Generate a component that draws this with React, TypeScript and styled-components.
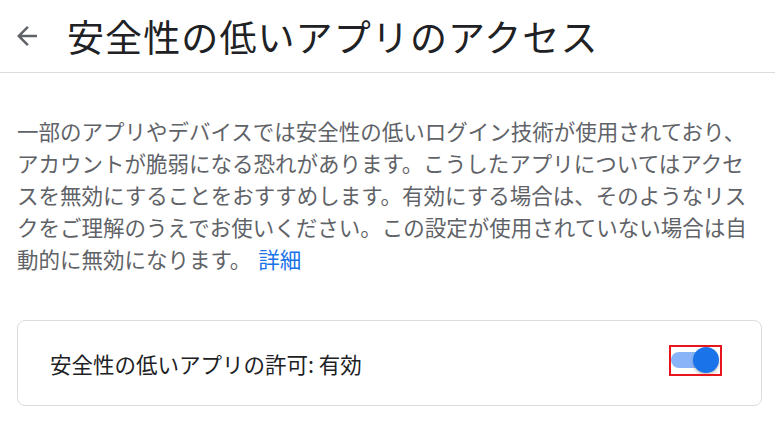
import styled, { createGlobalStyle } from "styled-components";

const GlobalStyle = createGlobalStyle`
  body {
    margin: 0;
    background: #ffffff;
    font-family: "Noto Sans CJK JP", "Noto Sans", sans-serif;
  }
`;

const Page = styled.div`
  width: 775px;
  height: 423px;
  overflow: hidden;
`;

const Header = styled.header`
  display: flex;
  align-items: center;
  gap: 25px;
  height: 72px;
  padding-left: 12px;
  border-bottom: 1px solid #dadce0;
  svg {
    flex: none;
    margin-top: -1px;
  }
  h1 {
    margin: 0;
    font-size: 37px;
    font-weight: 400;
    color: #202124;
    letter-spacing: 1.1px;
    line-height: 1;
  }
`;

const Main = styled.main`
  padding: 0 13px 0 17px;
`;

const Description = styled.p`
  margin: 42px 0 45px;
  font-size: 21.5px;
  line-height: 32px;
  color: #5f6368;
`;

const MoreLink = styled.a`
  color: #1a73e8;
  text-decoration: none;
  margin-left: 2px;
`;

const Card = styled.div`
  display: flex;
  align-items: center;
  justify-content: space-between;
  height: 84px;
  padding: 0 42px 0 32px;
  border: 1px solid #dadce0;
  border-radius: 8px;
  font-size: 21.5px;
  color: #202124;
`;

const Toggle = styled.div<{ $on: boolean }>`
  position: relative;
  width: 48px;
  height: 26px;
  margin-top: -6px;
  .track {
    position: absolute;
    left: 0;
    top: 5px;
    width: 44px;
    height: 16px;
    border-radius: 8px;
    background: ${(p) => (p.$on ? "#8ab4f8" : "#bdc1c6")};
  }
  .thumb {
    position: absolute;
    top: 0;
    left: ${(p) => (p.$on ? "22px" : "0")};
    width: 26px;
    height: 26px;
    border-radius: 50%;
    background: ${(p) => (p.$on ? "#1a73e8" : "#ffffff")};
    box-shadow: 0 2px 3px rgba(60, 64, 67, 0.3);
  }
  .mark {
    position: absolute;
    left: -2px;
    top: -2px;
    width: 49px;
    height: 27px;
    border: 2px solid #e8151b;
  }
`;

function App() {
  return (
    <Page>
      <GlobalStyle />
      <Header>
        <svg width="30" height="30" viewBox="0 0 24 24" fill="#5f6368">
          <path d="M20 11H7.83l5.59-5.59L12 4l-8 8 8 8 1.41-1.41L7.83 13H20v-2z" />
        </svg>
        <h1>安全性の低いアプリのアクセス</h1>
      </Header>
      <Main>
        <Description>
          一部のアプリやデバイスでは安全性の低いログイン技術が使用されており、アカウントが脆弱になる恐れがあります。こうしたアプリについてはアクセスを無効にすることをおすすめします。有効にする場合は、そのようなリスクをご理解のうえでお使いください。この設定が使用されていない場合は自動的に無効になります。{" "}
          <MoreLink href="#">詳細</MoreLink>
        </Description>
        <Card>
          <span>安全性の低いアプリの許可: 有効</span>
          <Toggle $on>
            <div className="track" />
            <div className="thumb" />
            <div className="mark" />
          </Toggle>
        </Card>
      </Main>
    </Page>
  );
}

export default App;
